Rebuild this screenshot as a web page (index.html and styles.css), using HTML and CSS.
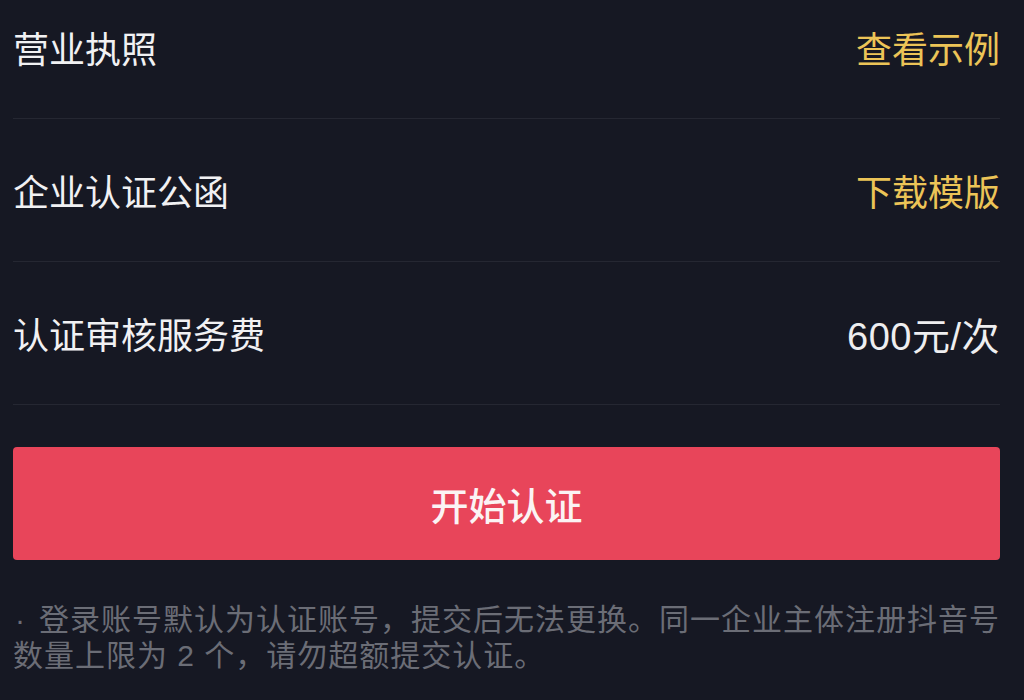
FILE: index.html
```html
<!DOCTYPE html>
<html lang="zh-CN">
<head>
<meta charset="utf-8">
<title>企业认证</title>
<link rel="stylesheet" href="styles.css">
</head>
<body>
<main class="page">
  <section class="list">
    <div class="row">
      <span class="label">营业执照</span>
      <span class="value link">查看示例</span>
    </div>
    <div class="row">
      <span class="label">企业认证公函</span>
      <span class="value link">下载模版</span>
    </div>
    <div class="row">
      <span class="label">认证审核服务费</span>
      <span class="value price">600元/次</span>
    </div>
  </section>
  <button class="cta" type="button">开始认证</button>
  <p class="note"><span class="dot">·</span>登录账号默认为认证账号，提交后无法更换。同一企业主体注册抖音号<br>数量上限为 2 个，请勿超额提交认证。</p>
</main>
</body>
</html>
```

FILE: styles.css
```css
html, body {
  margin: 0;
  padding: 0;
  background: #161823;
}

body {
  font-family: "Liberation Sans", "Noto Sans CJK SC", sans-serif;
  color: #f1f1f3;
  overflow: hidden;
}

.page {
  padding: 0 24px 0 13px;
}

.list {
  margin-top: -24px;
}

.row {
  height: 142px;
  display: flex;
  align-items: center;
  justify-content: space-between;
  border-bottom: 1px solid #252732;
  font-size: 36px;
}

.label {
  color: #f1f1f3;
}

.value {
  color: #eeeef0;
}

.price {
  font-size: 38px;
  letter-spacing: 0.5px;
}

.link {
  color: #ecc457;
}

.cta {
  display: block;
  width: 100%;
  height: 113px;
  margin-top: 42px;
  border: none;
  border-radius: 4px;
  background: #e8455a;
  color: #fbf3f4;
  font-family: "Noto Sans CJK SC", sans-serif;
  font-size: 38px;
  font-weight: 500;
}

.note {
  margin: 42px 0 0;
  font-size: 30px;
  line-height: 36px;
  letter-spacing: 1px;
  color: #6b6d76;
  white-space: nowrap;
}

.dot {
  display: inline-block;
  width: 26px;
  padding-left: 2px;
  box-sizing: border-box;
}
```
